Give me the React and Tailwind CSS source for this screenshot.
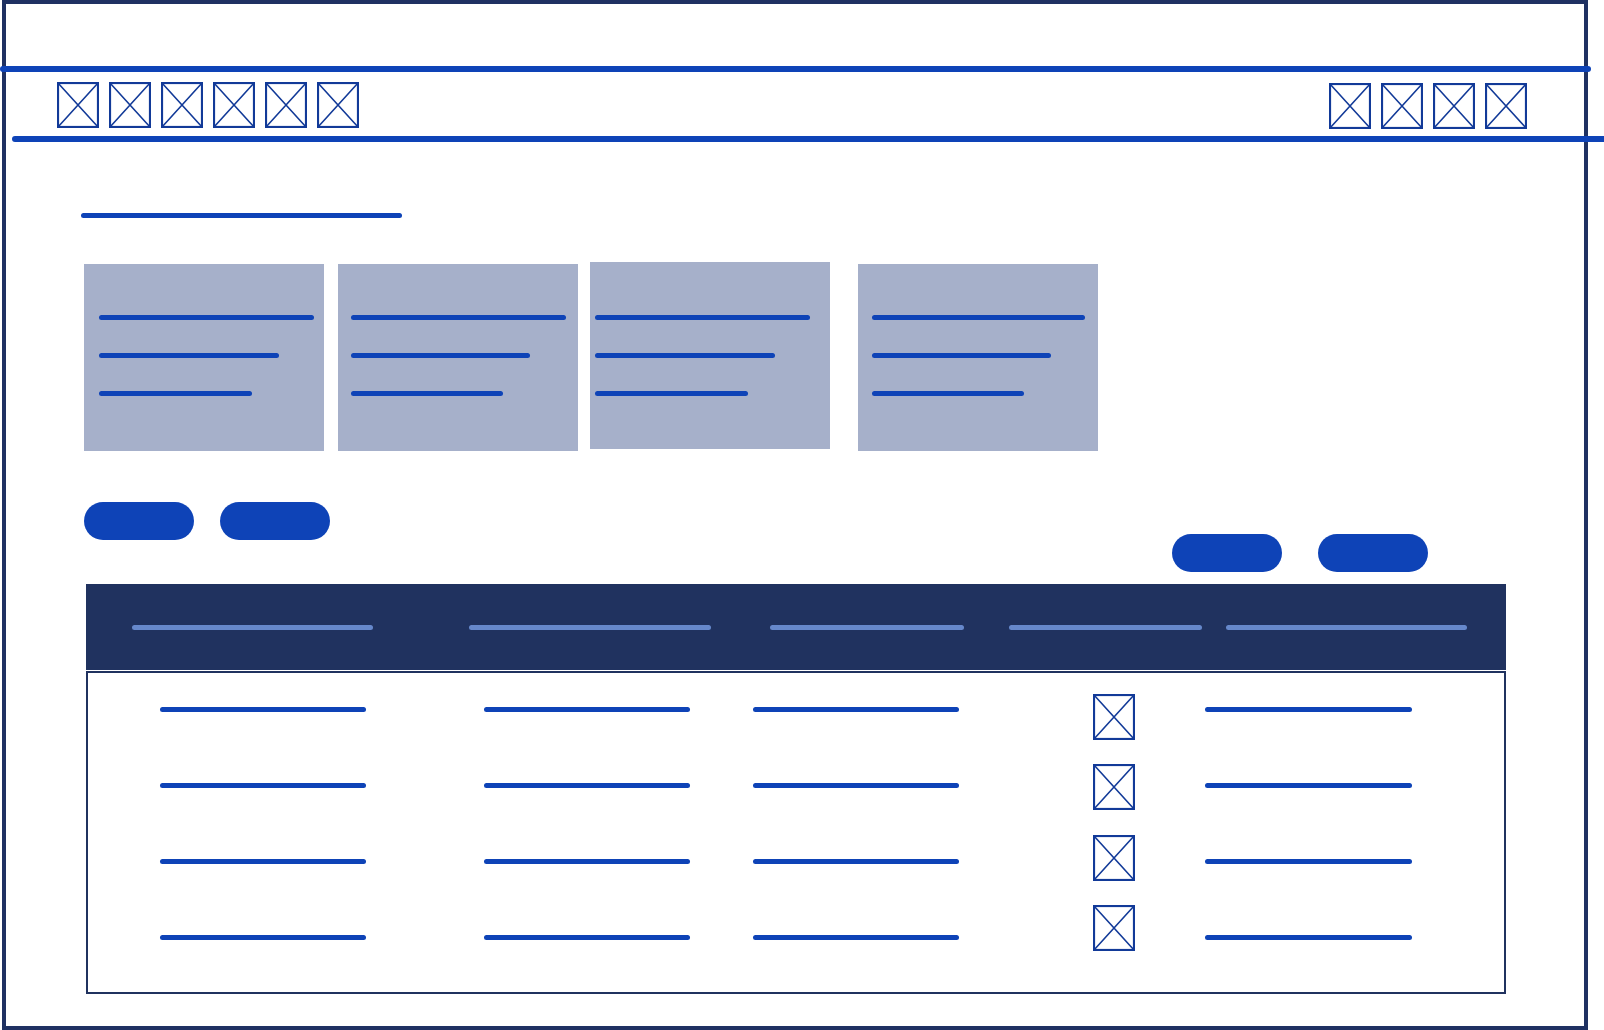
const BLUE = 'bg-[#0e43b7]'

function XBox({ className = '' }) {
  return (
    <svg width="42" height="46" viewBox="0 0 42 46" className={`shrink-0 ${className}`}>
      <rect x="1" y="1" width="40" height="44" fill="none" stroke="#123a98" strokeWidth="2.2" />
      <path d="M1 1 L41 45 M41 1 L1 45" stroke="#123a98" strokeWidth="1.6" fill="none" />
      <circle cx="1.5" cy="1.5" r="1.4" fill="#123a98" />
      <circle cx="40.5" cy="1.5" r="1.4" fill="#123a98" />
      <circle cx="1.5" cy="44.5" r="1.4" fill="#123a98" />
      <circle cx="40.5" cy="44.5" r="1.4" fill="#123a98" />
    </svg>
  )
}

function Bar({ className = '' }) {
  return <div className={`h-[5px] shrink-0 rounded-full ${BLUE} ${className}`} />
}

const cards = [
  { ml: 'ml-[78px]', pad: 'pl-[15px] pt-[51px]', shift: '', widths: ['w-[215px]', 'w-[180px]', 'w-[153px]'] },
  { ml: 'ml-[14px]', pad: 'pl-[13px] pt-[51px]', shift: '', widths: ['w-[215px]', 'w-[179px]', 'w-[152px]'] },
  { ml: 'ml-[12px]', pad: 'pl-[5px] pt-[53px]', shift: '-mt-[2px]', widths: ['w-[215px]', 'w-[180px]', 'w-[153px]'] },
  { ml: 'ml-[28px]', pad: 'pl-[14px] pt-[51px]', shift: '', widths: ['w-[213px]', 'w-[179px]', 'w-[152px]'] },
]

const rowIconOffsets = ['mt-[21px]', 'mt-[15px]', 'mt-[10px]', 'mt-[4px]']

export default function App() {
  return (
    <div className="h-[1030px] w-[1604px] overflow-hidden bg-white">
      <div className="ml-[2px] flex h-[1030px] w-[1586px] flex-col border-4 border-[#1f3162]">
        {/* top rule */}
        <div className={`-ml-[6px] mt-[62px] h-[6px] w-[1591px] shrink-0 rounded-full ${BLUE}`} />

        {/* nav icons */}
        <div className="flex h-[64px] shrink-0 items-start">
          <div className="ml-[51px] mt-[10px] flex gap-[10px]">
            {[0, 1, 2, 3, 4, 5].map((i) => (
              <XBox key={i} />
            ))}
          </div>
          <div className="ml-auto mr-[57px] mt-[11px] flex gap-[10px]">
            {[0, 1, 2, 3].map((i) => (
              <XBox key={i} />
            ))}
          </div>
        </div>

        {/* second rule */}
        <div className={`ml-[6px] h-[6px] w-[1600px] shrink-0 rounded-full ${BLUE}`} />

        {/* title */}
        <Bar className="ml-[75px] mt-[71px] w-[321px]" />

        {/* cards */}
        <div className="mt-[46px] flex shrink-0 items-start">
          {cards.map((c, i) => (
            <div
              key={i}
              className={`flex h-[187px] w-[240px] shrink-0 flex-col gap-[33px] bg-[#a6b0ca] ${c.ml} ${c.pad} ${c.shift}`}
            >
              {c.widths.map((w, j) => (
                <Bar key={j} className={w} />
              ))}
            </div>
          ))}
        </div>

        {/* buttons */}
        <div className="mt-[51px] flex shrink-0 items-start">
          <div className="ml-[78px] flex gap-[26px]">
            <div className={`h-[38px] w-[110px] rounded-full ${BLUE}`} />
            <div className={`h-[38px] w-[110px] rounded-full ${BLUE}`} />
          </div>
          <div className="ml-auto mr-[156px] mt-[32px] flex gap-[36px]">
            <div className={`h-[38px] w-[110px] rounded-full ${BLUE}`} />
            <div className={`h-[38px] w-[110px] rounded-full ${BLUE}`} />
          </div>
        </div>

        {/* table header */}
        <div className="ml-[80px] mt-[12px] flex h-[86px] w-[1420px] shrink-0 items-center bg-[#20325f]">
          <div className="ml-[46px] h-[5px] w-[241px] shrink-0 rounded-full bg-[#6688cb]" />
          <div className="ml-[96px] h-[5px] w-[242px] shrink-0 rounded-full bg-[#6688cb]" />
          <div className="ml-[59px] h-[5px] w-[194px] shrink-0 rounded-full bg-[#6688cb]" />
          <div className="ml-[45px] h-[5px] w-[193px] shrink-0 rounded-full bg-[#6688cb]" />
          <div className="ml-[24px] h-[5px] w-[241px] shrink-0 rounded-full bg-[#6688cb]" />
        </div>

        {/* table body */}
        <div className="ml-[80px] mt-[1px] flex h-[323px] w-[1420px] shrink-0 flex-col border-2 border-[#20325f]">
          {rowIconOffsets.map((iconMt, i) => (
            <div key={i} className="flex h-[76px] shrink-0 items-start">
              <Bar className="ml-[72px] mt-[34px] w-[206px]" />
              <Bar className="ml-[118px] mt-[34px] w-[206px]" />
              <Bar className="ml-[63px] mt-[34px] w-[206px]" />
              <XBox className={`ml-[134px] ${iconMt}`} />
              <Bar className="ml-[70px] mt-[34px] w-[207px]" />
            </div>
          ))}
        </div>
      </div>
    </div>
  )
}
